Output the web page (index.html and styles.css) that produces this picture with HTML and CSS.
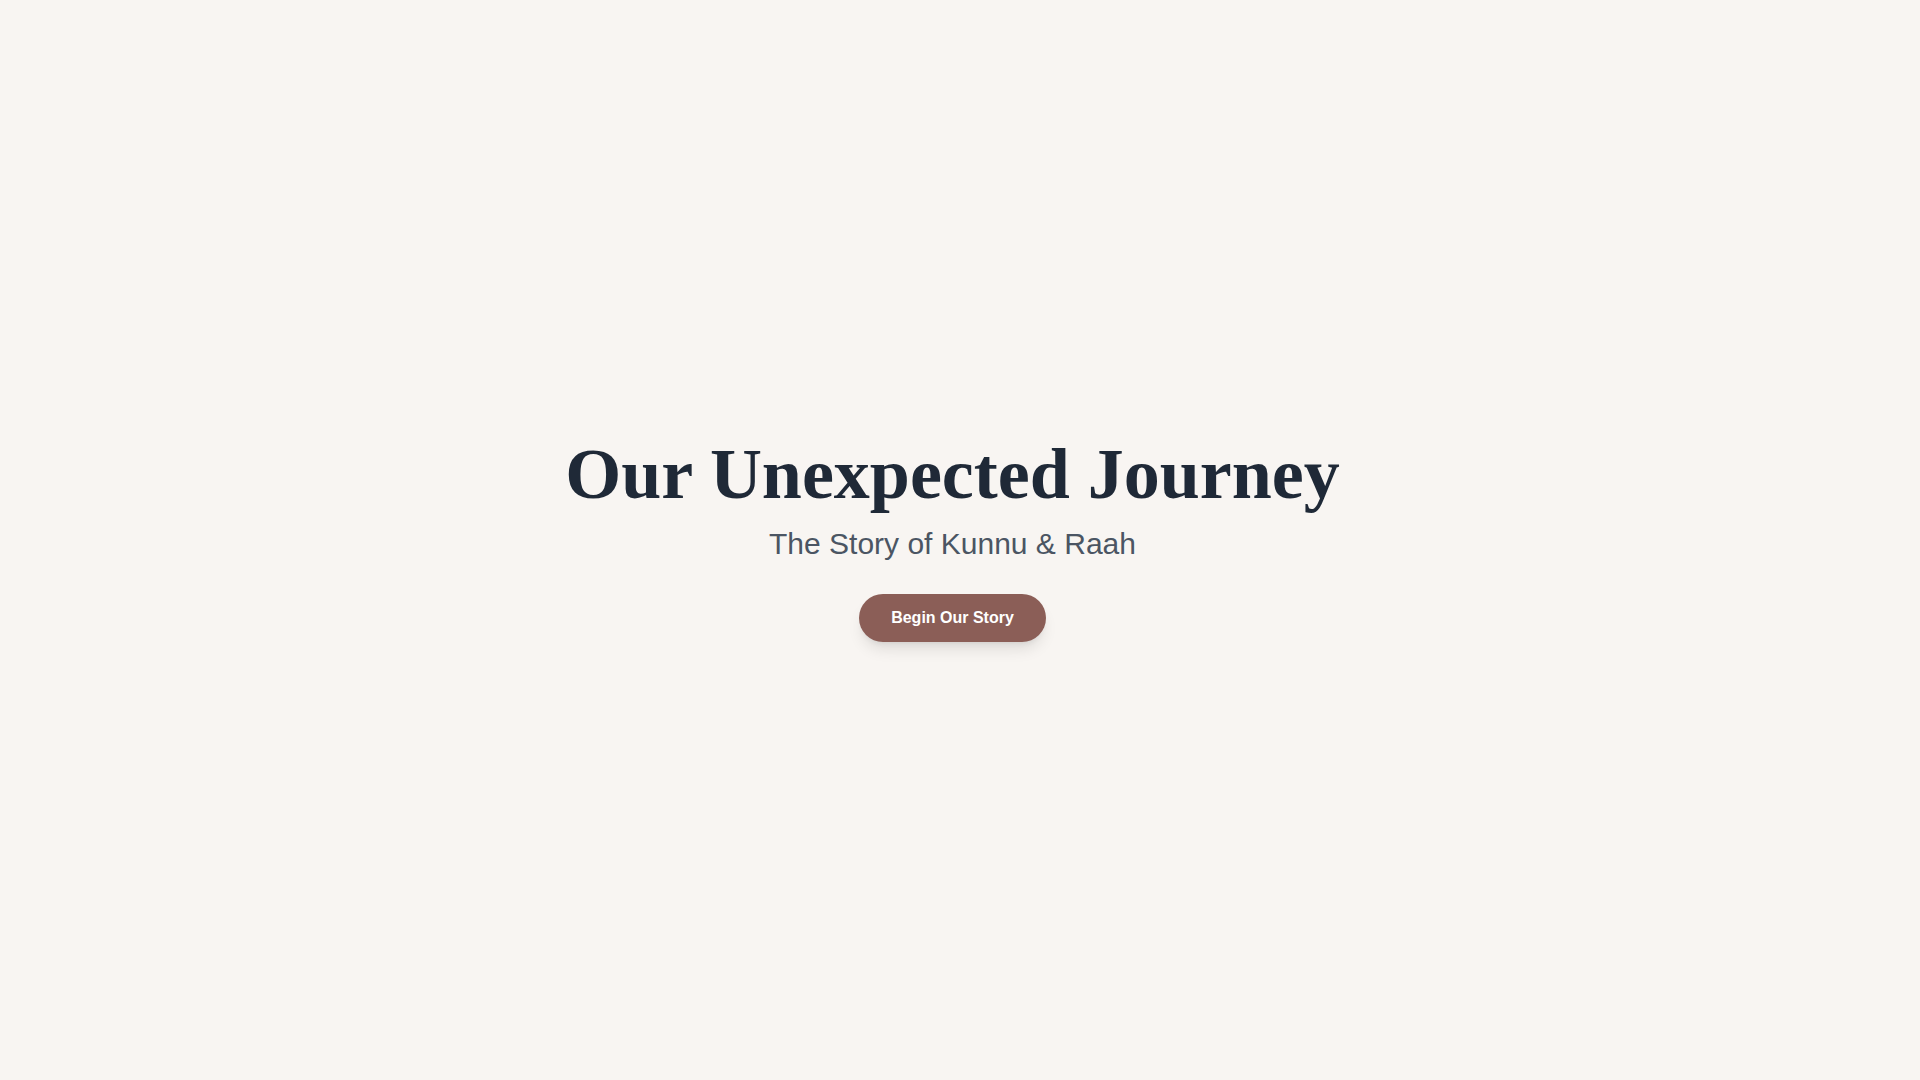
FILE: index.html
```html
<!DOCTYPE html>
<html lang="en">
<head>
  <meta charset="UTF-8" />
  <meta name="viewport" content="width=device-width, initial-scale=1.0"/>
  <title>Our Unexpected Journey</title>
  <link rel="stylesheet" href="styles.css">
</head>
<body>
  <section class="hero" id="top">
    <h1 class="hero-title">Our Unexpected Journey</h1>
    <p class="hero-subtitle">The Story of Kunnu &amp; Raah</p>
    <a class="btn-begin" href="#story">Begin Our Story</a>
  </section>

  <main class="story" id="story"></main>
</body>
</html>
```

FILE: styles.css
```css
html {
  scroll-behavior: smooth;
}
body {
  margin: 0;
  padding: 0;
  background-color: #f8f5f2;
  color: #1f2937;
  font-family: "Liberation Sans", Arial, sans-serif;
}
.hero {
  min-height: 100vh;
  display: flex;
  flex-direction: column;
  align-items: center;
  justify-content: center;
  text-align: center;
  box-sizing: border-box;
  padding: 0 39px 0 24px;
}
.hero-title {
  margin: 0 0 16px;
  font-family: "Liberation Serif", "Times New Roman", serif;
  font-size: 72px;
  line-height: 1;
  font-weight: 700;
  color: #1f2937;
}
.hero-subtitle {
  margin: 0;
  font-size: 30px;
  line-height: 36px;
  color: #4b5563;
}
.btn-begin {
  display: inline-block;
  margin-top: 32px;
  padding: 12px 32px;
  background-color: #8b5e57;
  color: #ffffff;
  font-size: 16px;
  line-height: 24px;
  font-weight: 700;
  text-decoration: none;
  border-radius: 9999px;
  box-shadow: 0 10px 15px -3px rgba(0,0,0,0.1), 0 4px 6px -4px rgba(0,0,0,0.1);
}
.story {
  min-height: 700vh;
}
```
